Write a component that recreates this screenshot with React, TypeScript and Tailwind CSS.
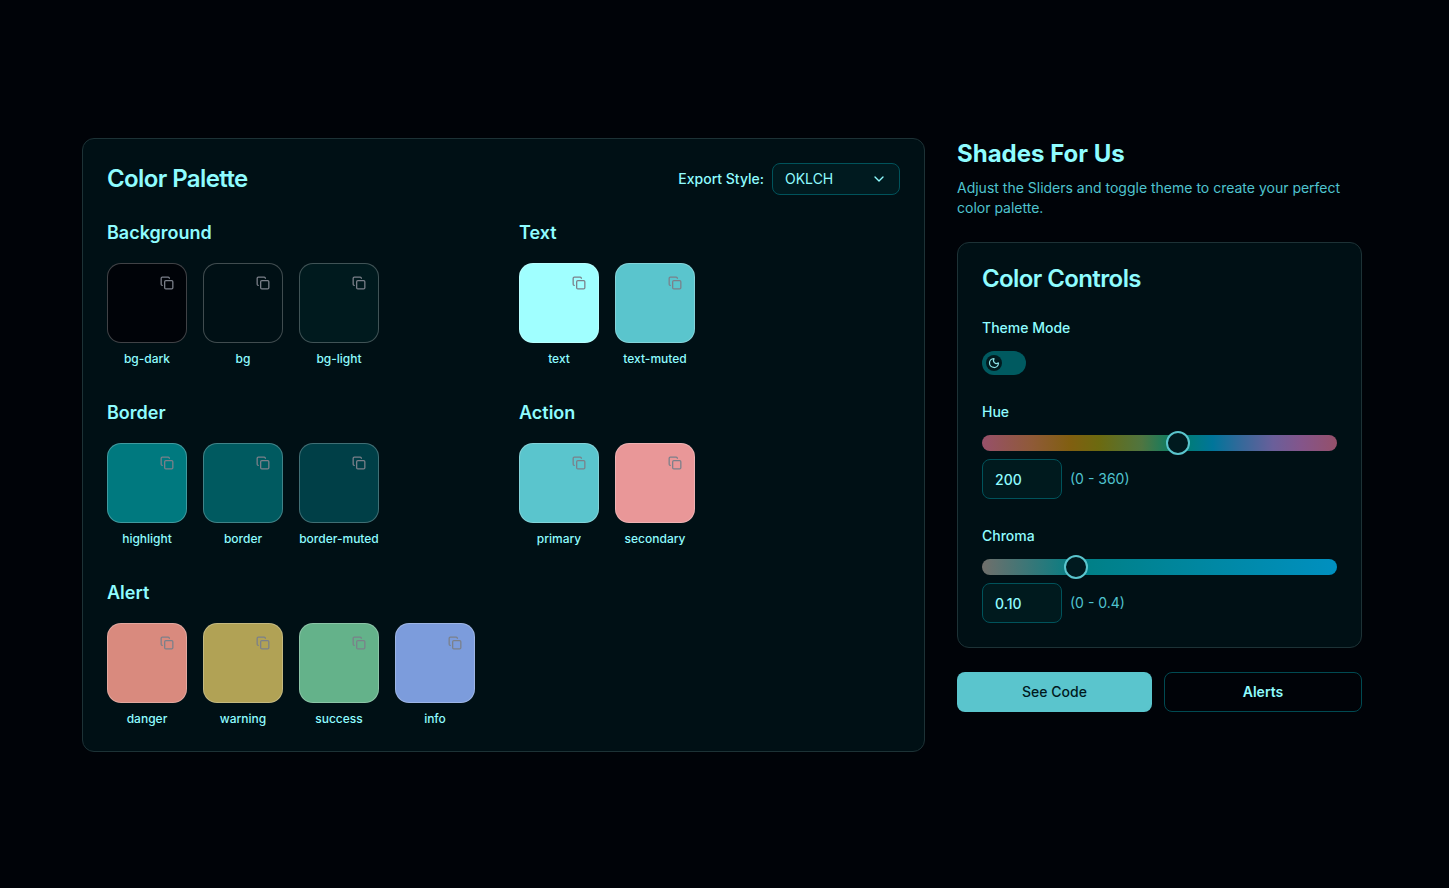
import { Copy, ChevronDown, Moon } from "lucide-react";

type Sw = { name: string; cls: string };

function Swatch({ name, cls }: Sw) {
  return (
    <div className="flex w-20 flex-col items-center gap-2">
      <div className={`relative h-20 w-20 rounded-[14px] border border-white/25 ${cls}`}>
        <Copy className="absolute right-[12px] top-[12px] h-[14px] w-[14px] text-[#7b808a]" strokeWidth={2.2} />
      </div>
      <span className="whitespace-nowrap text-xs font-medium leading-4 text-[#8ffcff]">{name}</span>
    </div>
  );
}

function Section({ title, items }: { title: string; items: Sw[] }) {
  return (
    <div>
      <h3 className="mb-4 text-lg font-semibold leading-7 text-[#8ffcff]">{title}</h3>
      <div className="flex gap-4">
        {items.map((i) => (
          <Swatch key={i.name} {...i} />
        ))}
      </div>
    </div>
  );
}

function Slider({ track, pos }: { track: string; pos: string }) {
  return (
    <div className={`relative h-4 w-full rounded-full ${track}`}>
      <div className={`absolute top-[-4px] h-6 w-6 rounded-full border-2 border-[#5ac5cd] bg-[#001a1f] ${pos}`} />
    </div>
  );
}

export default function App() {
  return (
    <div className="flex min-h-screen items-center justify-center bg-[#000308] pr-[5px] pt-[2px] font-['Inter',sans-serif] text-[#8ffcff]">
      <div className="flex w-[1280px] items-start gap-8">
        <div className="w-[843px] rounded-xl border border-[#1d3236] bg-[#001015] p-6">
          <div className="mb-6 flex h-8 items-center justify-between">
            <h2 className="text-2xl font-semibold leading-8 tracking-tight">Color Palette</h2>
            <div className="flex items-center gap-2">
              <span className="text-sm font-medium leading-5">Export Style:</span>
              <div className="flex h-8 w-32 items-center justify-between rounded-lg border border-[#00535b] bg-[#001a1f] pl-3 pr-3 text-sm">
                <span>OKLCH</span>
                <ChevronDown className="h-4 w-4" />
              </div>
            </div>
          </div>
          <div className="grid grid-cols-[380px_1fr] gap-x-8 gap-y-8">
            <Section
              title="Background"
              items={[
                { name: "bg-dark", cls: "bg-[#000308]" },
                { name: "bg", cls: "bg-[#001015]" },
                { name: "bg-light", cls: "bg-[#001a1e]" },
              ]}
            />
            <Section
              title="Text"
              items={[
                { name: "text", cls: "bg-[#a0ffff]" },
                { name: "text-muted", cls: "bg-[#5ac5cd]" },
              ]}
            />
            <Section
              title="Border"
              items={[
                { name: "highlight", cls: "bg-[#00797f]" },
                { name: "border", cls: "bg-[#005a60]" },
                { name: "border-muted", cls: "bg-[#003f47]" },
              ]}
            />
            <Section
              title="Action"
              items={[
                { name: "primary", cls: "bg-[#5ac5cd]" },
                { name: "secondary", cls: "bg-[#e99798]" },
              ]}
            />
            <Section
              title="Alert"
              items={[
                { name: "danger", cls: "bg-[#d98a7e]" },
                { name: "warning", cls: "bg-[#b1a255]" },
                { name: "success", cls: "bg-[#64b28a]" },
                { name: "info", cls: "bg-[#7c9cdc]" },
              ]}
            />
          </div>
        </div>

        <div className="flex w-[405px] flex-col">
          <h1 className="mb-2 text-2xl font-bold leading-8">Shades For Us</h1>
          <p className="mb-6 text-sm leading-5 text-[#4fc3cf]">
            Adjust the Sliders and toggle theme to create your perfect color palette.
          </p>
          <div className="mb-6 rounded-xl border border-[#1d3236] bg-[#001015] p-6">
            <h2 className="mb-[27px] text-2xl font-semibold leading-6 tracking-tight">Color Controls</h2>
            <div className="mb-[27px]">
              <div className="mb-[13px] text-sm font-medium leading-5">Theme Mode</div>
              <div className="flex h-6 w-11 items-center rounded-full bg-[#005a60] px-1">
                <div className="flex h-4 w-4 items-center justify-center rounded-full bg-[#001a1e]">
                  <Moon className="h-3 w-3 text-[#8ae0e6]" strokeWidth={2.5} />
                </div>
              </div>
            </div>
            <div className="mb-[27px]">
              <div className="mb-[13px] text-sm font-medium leading-5">Hue</div>
              <Slider
                track="bg-[linear-gradient(to_right,#97506a,#8f5a38_14%,#805f10_25%,#6c6a10_33%,#4f7540_45%,#007f6a_55%,#00759a_65%,#2f6a9a_72%,#6a5f9a_82%,#84558a_90%,#95506a)]"
                pos="left-[184px]"
              />
              <div className="mt-2 flex items-center gap-2">
                <div className="flex h-10 w-20 items-center rounded-lg border border-[#00535b] bg-[#001a1e] px-3 pt-px text-sm font-medium">200</div>
                <span className="text-sm text-[#4fc3cf]">(0 - 360)</span>
              </div>
            </div>
            <div>
              <div className="mb-[13px] text-sm font-medium leading-5">Chroma</div>
              <Slider
                track="bg-[linear-gradient(to_right,#706f6b,#007f85_27%,#0090c0)]"
                pos="left-[82px]"
              />
              <div className="mt-2 flex items-center gap-2">
                <div className="flex h-10 w-20 items-center rounded-lg border border-[#00535b] bg-[#001a1e] px-3 pt-px text-sm font-medium">0.10</div>
                <span className="text-sm text-[#4fc3cf]">(0 - 0.4)</span>
              </div>
            </div>
          </div>
          <div className="flex gap-3">
            <button className="h-10 w-[195px] rounded-lg bg-[#5ac5cd] text-sm font-medium text-[#001a1e]">See Code</button>
            <button className="h-10 flex-1 rounded-lg border border-[#004a52] bg-[#000308] text-sm font-semibold">Alerts</button>
          </div>
        </div>
      </div>
    </div>
  );
}
